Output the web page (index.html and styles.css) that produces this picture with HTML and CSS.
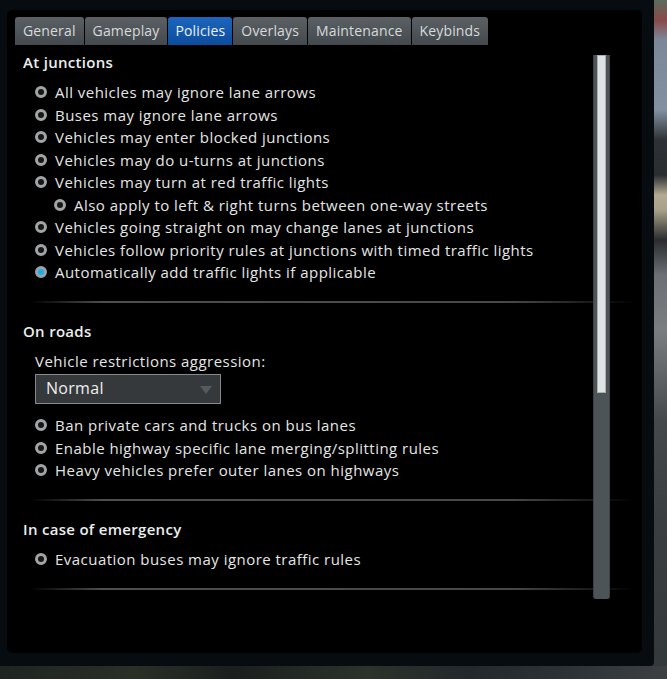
FILE: index.html
```html
<!DOCTYPE html>
<html lang="en">
<head>
  <meta charset="UTF-8" />
  <title>Options - Policies</title>
  <link rel="stylesheet" href="styles.css">
</head>
<body>

  <div class="window">
    <div class="panel">

      <div class="tabs">
        <div class="tab">General</div>
        <div class="tab">Gameplay</div>
        <div class="tab active">Policies</div>
        <div class="tab">Overlays</div>
        <div class="tab">Maintenance</div>
        <div class="tab">Keybinds</div>
      </div>

      <div class="body">
        <div class="content">

          <div class="section">
            <div class="heading">At junctions</div>
            <div class="option"><span class="radio"></span>All vehicles may ignore lane arrows</div>
            <div class="option"><span class="radio"></span>Buses may ignore lane arrows</div>
            <div class="option"><span class="radio"></span>Vehicles may enter blocked junctions</div>
            <div class="option"><span class="radio"></span>Vehicles may do u-turns at junctions</div>
            <div class="option"><span class="radio"></span>Vehicles may turn at red traffic lights</div>
            <div class="option sub"><span class="radio"></span>Also apply to left &amp; right turns between one-way streets</div>
            <div class="option"><span class="radio"></span>Vehicles going straight on may change lanes at junctions</div>
            <div class="option"><span class="radio"></span>Vehicles follow priority rules at junctions with timed traffic lights</div>
            <div class="option"><span class="radio on"></span>Automatically add traffic lights if applicable</div>
            <div class="separator"></div>
          </div>

          <div class="section">
            <div class="heading">On roads</div>
            <div class="label">Vehicle restrictions aggression:</div>
            <div class="dropdown">Normal<span class="arrow"></span></div>
            <div class="option"><span class="radio"></span>Ban private cars and trucks on bus lanes</div>
            <div class="option"><span class="radio"></span>Enable highway specific lane merging/splitting rules</div>
            <div class="option"><span class="radio"></span>Heavy vehicles prefer outer lanes on highways</div>
            <div class="separator"></div>
          </div>

          <div class="section">
            <div class="heading">In case of emergency</div>
            <div class="option"><span class="radio"></span>Evacuation buses may ignore traffic rules</div>
            <div class="separator"></div>
          </div>

        </div>
        <div class="scrollbar"><div class="thumb"></div></div>
      </div>

    </div>
  </div>
  <div class="ground"></div>

</body>
</html>
```

FILE: styles.css
```css
body {
  margin: 0;
  font-family: "Open Sans", "DejaVu Sans", sans-serif;
  color: #e4e6e6;
  background: linear-gradient(180deg, #5c6a5e 0px, #8a4a48 20px, #7c8898 40px, #8290a0 110px, #2e3236 140px, #2a2e30 175px, #b2aa92 195px, #a8a088 210px, #2a2c2e 240px, #6c7074 275px, #7a7e80 330px, #45494c 420px, #3a3e40 520px, #33383a 679px);
  height: 679px;
  overflow: hidden;
}
.window {
  width: 654px;
  height: 666px;
  box-sizing: border-box;
  padding: 10px 12px 13px 7px;
  background: #070c11;
  border-radius: 0 0 4px 0;
}
.panel {
  height: 100%;
  background: #000;
  border-radius: 5px;
  padding: 7px 0 0 8px;
  box-sizing: border-box;
}
.tabs {
  display: flex;
  height: 28px;
}
.tab {
  padding: 0 8px;
  margin-right: 1px;
  line-height: 28px;
  font-size: 14px;
  letter-spacing: 0.15px;
  color: #d6dadb;
  background: linear-gradient(180deg, #5a6064, #44494d);
  border-radius: 3px 3px 0 0;
}
.tab.active {
  padding: 0 7px;
  color: #eef2f6;
  background: linear-gradient(180deg, #1c66bd, #0c4c9c);
}
.body {
  display: flex;
  height: 554px;
}
.content {
  width: 578px;
  padding: 6px 0 0 8px;
  box-sizing: border-box;
}
.heading {
  font-size: 15px;
  font-weight: 600;
  line-height: 22px;
  margin-bottom: 8px;
  letter-spacing: 0.3px;
  color: #eceeee;
}
.option {
  display: flex;
  align-items: center;
  height: 22.5px;
  padding-left: 12px;
  font-size: 15px;
  letter-spacing: 0.47px;
}
.option.sub {
  padding-left: 31px;
}
.radio {
  width: 12px;
  height: 12px;
  box-sizing: border-box;
  border-radius: 50%;
  border: 3px solid #a2a4a5;
  background: #161818;
  margin-right: 8px;
  flex: none;
}
.radio.on {
  border-color: #9ea2a4;
  background: #14aef0;
}
.label {
  font-size: 15px;
  line-height: 22px;
  padding-left: 12px;
  margin: 1px 0;
  letter-spacing: 0.47px;
}
.dropdown {
  position: relative;
  width: 186px;
  height: 30px;
  box-sizing: border-box;
  margin: 2px 0 10px 12px;
  padding-left: 10px;
  border: 1px solid #85898c;
  background: #36393c;
  font-size: 16px;
  line-height: 27px;
  letter-spacing: 0.3px;
  color: #eeeeee;
}
.arrow {
  position: absolute;
  right: 8px;
  top: 11px;
  border-left: 6px solid transparent;
  border-right: 6px solid transparent;
  border-top: 8px solid #565a5d;
}
.separator {
  height: 2px;
  margin: 17px -42px 17.5px 7px;
  background: linear-gradient(90deg, rgba(70, 70, 70, 0), #4e4e4e 12%, #484848 80%, rgba(40, 40, 40, 0));
}
.scrollbar {
  width: 17px;
  height: 544px;
  margin-top: 10px;
  box-sizing: border-box;
  background: #4c5457;
  border-left: 1px solid #3b4346;
  border-right: 1px solid #3b4346;
  border-radius: 0 0 3px 3px;
  padding: 0 3px;
}
.thumb {
  height: 338px;
  background: #dfe3e3;
  border: 1px solid #a9b1b3;
  box-sizing: border-box;
}
.ground {
  height: 13px;
  background: linear-gradient(90deg, #1e2420, #2a3026 20%, #1a1f1e 35%, #2c332a 55%, #22282c 70%, #2c3236 85%, #3c4042);
}
```
